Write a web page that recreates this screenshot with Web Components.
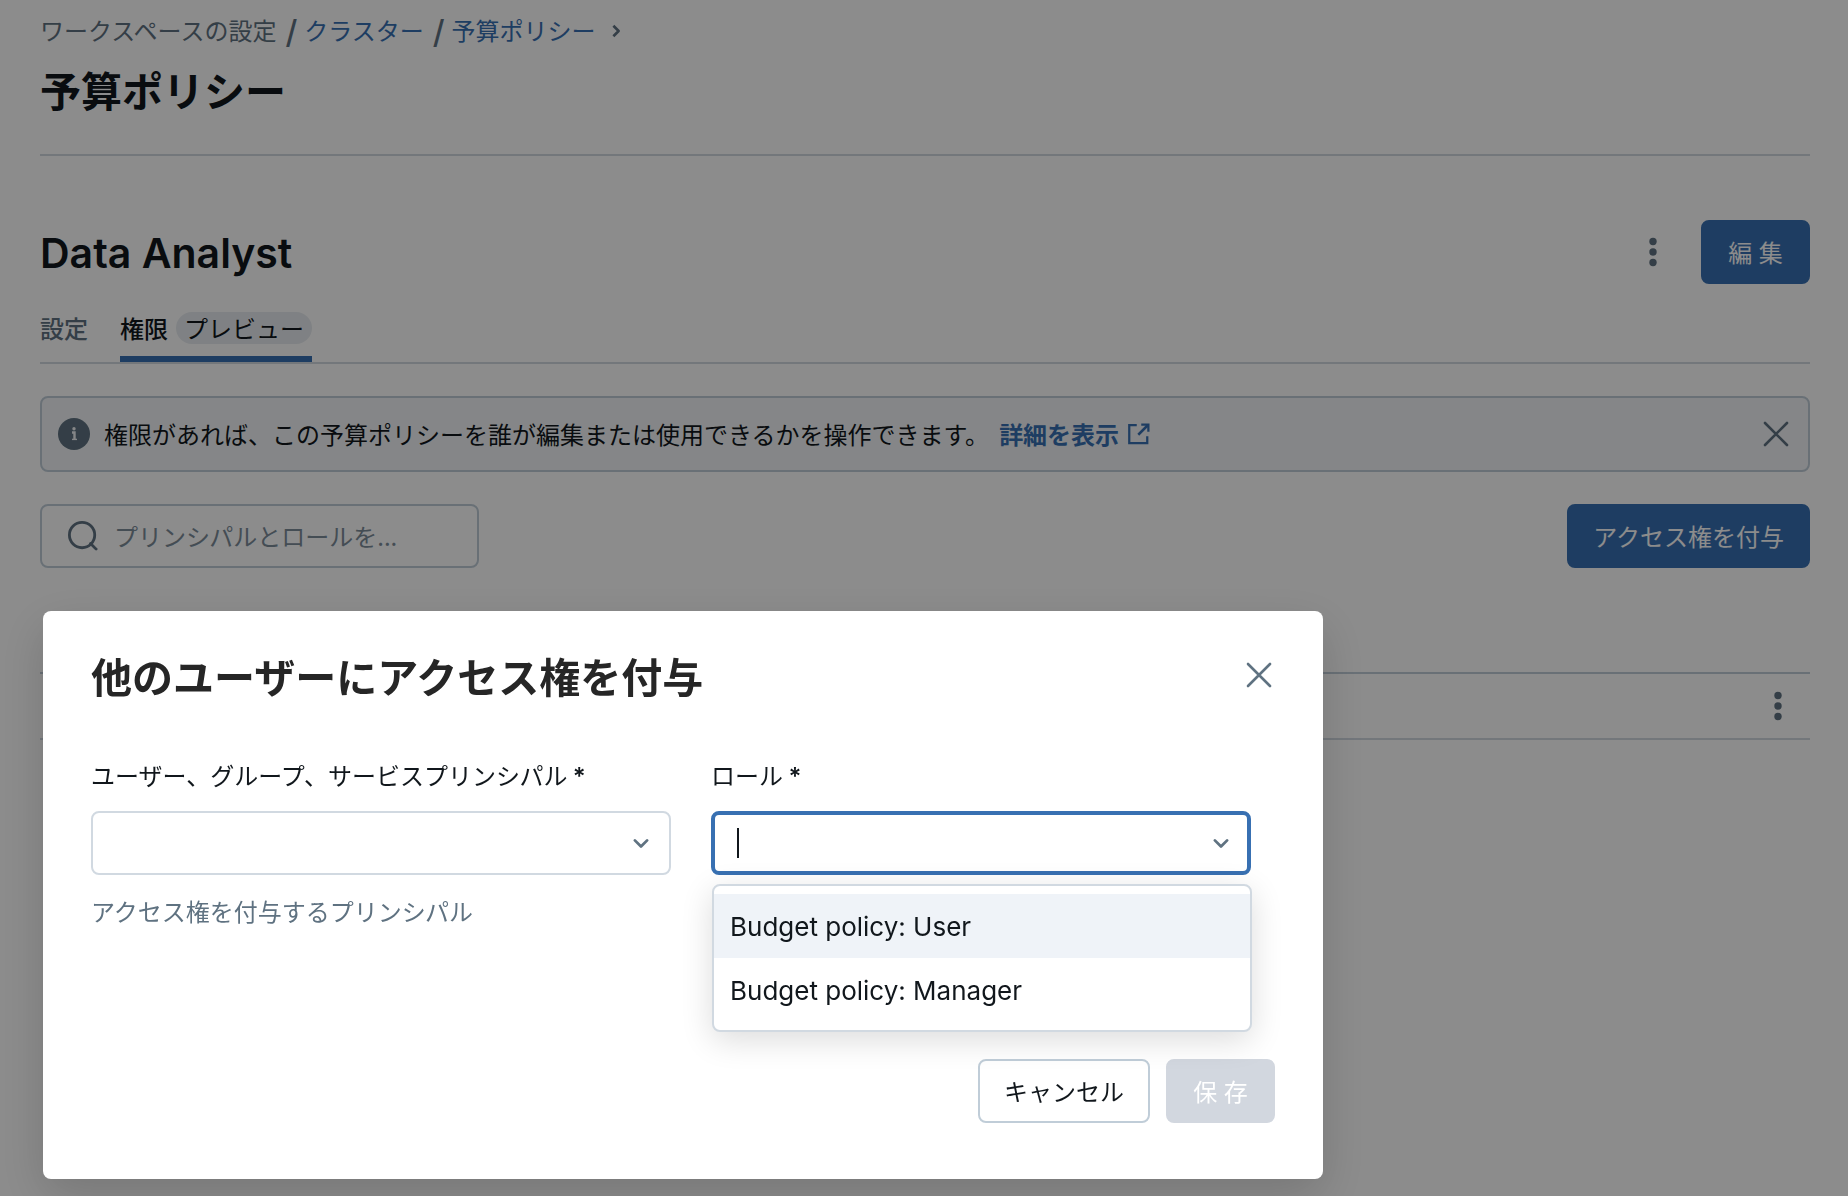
<!DOCTYPE html>
<html lang="ja">
<head>
<meta charset="utf-8">
<title>予算ポリシー</title>
<style>
:root {
    --text: #11171c;
    --muted: #5f7281;
    --primary: #3870b2;
    --line: #d1d9e1;
    --border: #c0cdd8;
    --latin: Inter, "Noto Sans CJK JP", sans-serif;
}
body {
    margin: 0;
    background: #fff;
    color: var(--text);
    font: 24px/32px "Noto Sans CJK JP", Inter, sans-serif;
}
</style>
</head>
<body>
<policy-page>
  <bread-crumbs></bread-crumbs>
  <policy-heading>Data Analyst</policy-heading>
  <policy-tabs></policy-tabs>
  <info-alert>権限があれば、この予算ポリシーを誰が編集または使用できるかを操作できます。</info-alert>
  <policy-toolbar></policy-toolbar>
  <policy-table></policy-table>
</policy-page>
<modal-dialog heading="他のユーザーにアクセス権を付与">
  <combo-box label="ユーザー、グループ、サービスプリンシパル">
    <span slot="hint">アクセス権を付与するプリンシパル</span>
  </combo-box>
  <combo-box label="ロール" options="Budget policy: User|Budget policy: Manager" open></combo-box>
  <app-button slot="footer">キャンセル</app-button>
  <app-button slot="footer" kind="disabled">保 存</app-button>
</modal-dialog>

<script>
const icons = {
    dots: '<g fill="currentColor" stroke="none"><circle cx="16" cy="5.5" r="3.7"/><circle cx="16" cy="16" r="3.7"/><circle cx="16" cy="26.5" r="3.7"/></g>',
    close: '<path d="M5 5l22 22M27 5L5 27" stroke-width="2.6"/>',
    chevron: '<path d="M9 13l7 7 7-7" stroke-width="3.2"/>',
    next: '<path d="M13 10l6 6-6 6" stroke-width="3" stroke-linecap="butt"/>',
    search: '<circle cx="15" cy="15" r="13.5" stroke-width="3"/><path d="M24 24l6 6" stroke-width="3"/>',
    external: '<path d="M13 4H3v24h24v-9" stroke-width="3" stroke-linecap="butt" stroke-linejoin="miter"/><path d="M27 5L15 17" stroke-width="3.4" stroke-linecap="butt"/><path d="M19 2h11v11h-3V7l-2-2h-6z" fill="currentColor" stroke="none"/>',
    info: '<circle cx="16" cy="16" r="16" fill="currentColor" stroke="none"/><path d="M14 14.5h2.5V22" stroke="#f2f5f7" stroke-width="2.4" stroke-linecap="butt" stroke-linejoin="miter"/><path d="M14 21.4h5" stroke="#f2f5f7" stroke-width="1.4" stroke-linecap="butt"/><circle cx="16" cy="10.8" r="1.7" fill="#f2f5f7" stroke="none"/>',
}

// every element clones its own markup into an open root
function define(name, html, setup) {
    const template = document.createElement('template');
    template.innerHTML = html;
    customElements.define(name, class extends HTMLElement {
        constructor() {
            super();
            this.attachShadow({mode: 'open'}).append(template.content.cloneNode(true));
        }

        connectedCallback() {
            if (setup) setup(this, this.shadowRoot)
        }
    });
}

define('app-icon', `
<style>
:host { display: block; flex: none; width: 32px; height: 32px; color: var(--muted); }
svg { display: block; width: 100%; height: 100%; overflow: visible; }
</style>
<svg viewBox="0 0 32 32" fill="none" stroke="currentColor" stroke-width="2" stroke-linecap="round" stroke-linejoin="round" aria-hidden="true"></svg>
`, (el, root) => {
    root.querySelector('svg').innerHTML = icons[el.getAttribute('name')]
})

define('icon-button', `
<style>
:host { display: block; flex: none; }
button { display: flex; align-items: center; justify-content: center; width: 64px; height: 64px; padding: 0; border: 0; background: none; cursor: pointer; }
:host([compact]) button { width: 32px; height: 32px; }
</style>
<button type="button"><slot></slot></button>
`, (el, root) => {
    root.querySelector('button').setAttribute('aria-label', el.getAttribute('label'))
})

define('app-button', `
<style>
:host { display: block; flex: none; }
button {
    box-sizing: border-box;
    min-width: 109px;
    height: 64px;
    padding: 3px 24px 0;
    border: 2px solid var(--border);
    border-radius: 8px;
    background: #fff;
    color: var(--text);
    font: inherit;
    font-family: var(--latin);
    white-space: pre;
    cursor: pointer;
}
:host([kind="primary"]) button { border-color: var(--primary); background: var(--primary); color: #fff; }
:host([kind="disabled"]) button { border-color: #d2d7df; background: #d2d7df; color: #fff; cursor: default; }
</style>
<button type="button"><slot></slot></button>
`, (el, root) => {
    root.querySelector('button').disabled = el.getAttribute('kind') === 'disabled'
})

define('policy-page', `
<style>
:host { display: block; padding: 10px 38px 40px 40px; }
</style>
<slot></slot>
`)

define('bread-crumbs', `
<style>
:host { display: block; padding-bottom: 38px; border-bottom: 2px solid var(--line); }
nav { display: flex; align-items: center; height: 40px; color: var(--muted); }
a { color: var(--primary); text-decoration: none; }
i { margin: 4px 7px 0 9px; font: 500 32px/32px var(--latin); }
app-icon { width: 28px; height: 28px; margin: 2px 0 0 6px; }
h1 { margin: 12px 0 0; font-size: 41px; line-height: 54px; font-weight: 600; }
</style>
<nav aria-label="breadcrumb">
  <span>ワークスペースの設定</span><i>/</i><a href="#clusters">クラスター</a><i>/</i><a href="#policies">予算ポリシー</a><app-icon name="next"></app-icon>
</nav>
<h1>予算ポリシー</h1>
`)

define('policy-heading', `
<style>
:host { display: flex; align-items: center; gap: 16px; margin-top: 64px; }
h2 { flex: 1; margin: 0; padding-top: 2px; font: 600 41px/62px var(--latin); }
</style>
<h2><slot></slot></h2>
<icon-button label="メニュー"><app-icon name="dots"></app-icon></icon-button>
<app-button kind="primary">編 集</app-button>
`)

define('policy-tabs', `
<style>
:host { display: block; margin-top: 28px; border-bottom: 2px solid var(--line); }
div { display: flex; gap: 32px; }
button { display: flex; gap: 8px; padding: 0 0 12px; border: 0; border-bottom: 6px solid transparent; background: none; color: var(--muted); font: inherit; font-weight: 500; cursor: pointer; }
button[aria-selected="true"] { border-color: var(--primary); color: var(--text); }
span { padding: 0 8px; border-radius: 16px; background: #e8ecf0; font-weight: 400; }
</style>
<div role="tablist">
  <button type="button" role="tab" aria-selected="false">設定</button>
  <button type="button" role="tab" aria-selected="true">権限<span>プレビュー</span></button>
</div>
`)

define('info-alert', `
<style>
:host { display: flex; align-items: center; box-sizing: border-box; height: 76px; margin-top: 32px; padding-left: 16px; border: 2px solid var(--border); border-radius: 8px; background: #f2f5f7; }
p { flex: 1; display: flex; gap: 10px; margin: 0 0 0 14px; }
a { display: flex; align-items: center; gap: 8px; color: var(--primary); font-weight: 600; text-decoration: none; }
a app-icon { width: 24px; height: 24px; color: inherit; }
</style>
<app-icon name="info"></app-icon>
<p><span><slot></slot></span><a href="#details">詳細を表示<app-icon name="external"></app-icon></a></p>
<icon-button label="閉じる"><app-icon name="close"></app-icon></icon-button>
`)

define('policy-toolbar', `
<style>
:host { display: flex; justify-content: space-between; margin-top: 32px; }
label { display: flex; align-items: center; gap: 16px; box-sizing: border-box; width: 439px; height: 64px; padding: 0 24px 0 26px; border: 2px solid var(--border); border-radius: 8px; }
app-icon { width: 30px; height: 30px; }
input { flex: 1; min-width: 0; padding: 0; border: 0; outline: 0; background: none; color: inherit; font: inherit; }
input::placeholder { color: #7c8c9a; opacity: 1; }
</style>
<label><app-icon name="search"></app-icon><input type="text" placeholder="プリンシパルとロールを..."></label>
<app-button kind="primary">アクセス権を付与</app-button>
`)

define('policy-table', `
<style>
:host { display: block; margin-top: 40px; }
table { width: 100%; border-collapse: separate; border-spacing: 0; }
th, td { height: 64px; padding: 0; border-bottom: 2px solid var(--line); }
th { border-color: var(--border); }
th:last-child { width: 64px; }
</style>
<table>
  <thead><tr><th></th><th></th><th></th></tr></thead>
  <tbody><tr><td></td><td></td><td><icon-button label="メニュー"><app-icon name="dots"></app-icon></icon-button></td></tr></tbody>
</table>
`)

define('combo-box', `
<style>
:host { display: block; position: relative; }
label { display: block; height: 32px; margin-bottom: 20px; }
b { font-family: var(--latin); font-weight: 600; }
.field { display: flex; align-items: center; box-sizing: border-box; height: 64px; padding: 0 14px 0 24px; border: 2px solid var(--line); border-radius: 8px; }
:host([open]) .field { padding: 0 12px 0 22px; border: 4px solid var(--primary); }
.caret { display: none; width: 2px; height: 30px; background: var(--text); }
:host([open]) .caret { display: block; }
input { flex: 1; min-width: 0; padding: 0; border: 0; outline: 0; background: none; font: inherit; caret-color: transparent; }
app-icon { width: 28px; height: 28px; }
.hint { margin-top: 20px; color: var(--muted); }
ul { display: none; position: absolute; top: 125px; left: 1px; right: -1px; margin: 0; padding: 8px 0; border: 2px solid var(--line); border-radius: 8px; background: #fff; box-shadow: 0 8px 32px rgba(0, 0, 0, .14); list-style: none; }
:host([open]) ul { display: block; }
li { padding: 17px 16px 15px; font: 26px/32px var(--latin); }
li[aria-selected="true"] { background: #eff3f8; }
</style>
<label for="field"><span></span> <b>*</b></label>
<div class="field">
  <span class="caret"></span>
  <input id="field" type="text" role="combobox" aria-controls="list" aria-expanded="false" autocomplete="off">
  <app-icon name="chevron"></app-icon>
</div>
<div class="hint"><slot name="hint"></slot></div>
<ul id="list" role="listbox"></ul>
`, (el, root) => {
    root.querySelector('label span').textContent = el.getAttribute('label')
    const input = root.querySelector('input')
    const list = root.querySelector('ul')
    input.setAttribute('aria-expanded', el.hasAttribute('open'))
    const options = (el.getAttribute('options') || '').split('|').filter(Boolean)
    list.replaceChildren(...options.map((text, i) => {
        const li = document.createElement('li')
        li.setAttribute('role', 'option')
        li.setAttribute('aria-selected', i === 0)
        li.textContent = text
        li.addEventListener('click', () => {
            input.value = text
            el.removeAttribute('open')
        })
        return li
    }))
})

define('modal-dialog', `
<style>
:host { display: block; position: fixed; inset: 0; overflow: hidden; background: rgba(0, 0, 0, .45); }
section { position: absolute; top: 611px; left: 43px; box-sizing: border-box; width: 1280px; max-width: calc(100% - 86px); padding: 40px 48px 56px; border-radius: 8px; background: #fff; box-shadow: 0 16px 48px rgba(0, 0, 0, .16); }
header { display: flex; align-items: center; justify-content: space-between; margin-bottom: 60px; }
h2 { margin: 0; color: #262626; font-size: 41px; line-height: 48px; font-weight: 600; }
.fields { display: grid; grid-template-columns: 29fr 27fr; gap: 40px; padding-right: 24px; }
footer { display: flex; justify-content: flex-end; gap: 16px; margin-top: 132px; }
</style>
<section role="dialog" aria-modal="true" aria-labelledby="heading">
  <header>
    <h2 id="heading"></h2>
    <icon-button compact label="閉じる"><app-icon name="close"></app-icon></icon-button>
  </header>
  <div class="fields"><slot></slot></div>
  <footer><slot name="footer"></slot></footer>
</section>
`, (el, root) => {
    root.querySelector('h2').textContent = el.getAttribute('heading')
})
</script>
</body>
</html>
